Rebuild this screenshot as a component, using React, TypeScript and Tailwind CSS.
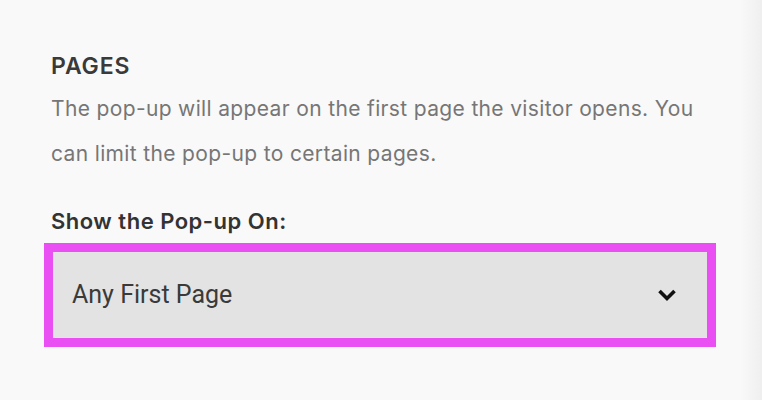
import { useState } from "react";

export default function App() {
  const [value, setValue] = useState("Any First Page");

  return (
    <div className="flex h-[400px] w-[762px] bg-[#f9f9f9] font-['Inter',sans-serif]">
      <div className="flex-1 pl-[44px] pt-[52px]">
        <div className="pl-[7px]">
          <h2 className="text-[23px] font-semibold leading-[28px] tracking-[0.9px] text-[#3a3a3a]">PAGES</h2>
          <p className="mt-[6px] w-[670px] text-[21px] leading-[45px] tracking-[0.35px] text-[#767676]">
            The pop-up will appear on the first page the visitor opens. You can limit the pop-up to certain pages.
          </p>
          <div className="mt-[32px] text-[22px] font-semibold leading-[26px] tracking-[0.5px] text-[#333]">Show the Pop-up On:</div>
        </div>

        {/* Select */}
        <div className="mt-[9px] flex h-[104px] w-[672px] items-center justify-between border-[9px] border-[#e94ff3] bg-[#e3e3e3] pl-[19px] pr-[30px]">
          <span
            className="font-['Roboto',sans-serif] text-[25px] text-[#3a3a3a]"
            onClick={() => setValue(value)}
          >
            {value}
          </span>
          <svg width="20" height="14" viewBox="0 0 20 14" fill="none" stroke="#111" strokeWidth="3.6" strokeLinejoin="miter">
            <polyline points="2.5 3 10 10.5 17.5 3" />
          </svg>
        </div>
      </div>
      <div className="w-[22px] bg-gradient-to-r from-[#f9f9f9] to-[#efefef]" />
    </div>
  );
}
